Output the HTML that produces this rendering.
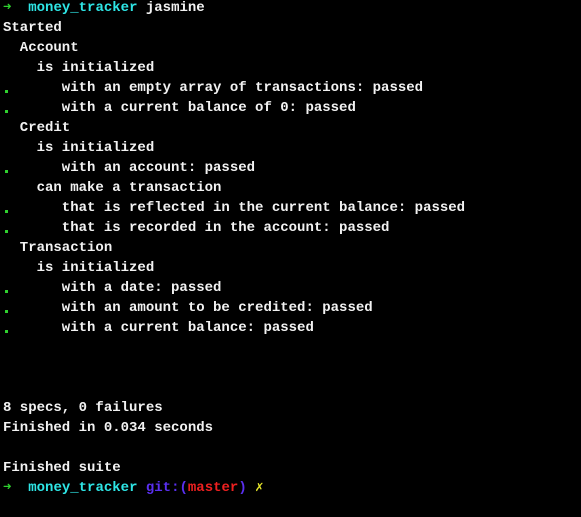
<!DOCTYPE html>
<html><head><meta charset="utf-8"><style>
html,body{margin:0;padding:0;background:#000;width:581px;height:517px;overflow:hidden}
pre{margin:0;position:absolute;left:3px;top:-2px;font-family:"Liberation Mono","DejaVu Sans Mono",monospace;font-weight:bold;font-size:14px;line-height:20px;color:#f2f2f2}
.g{color:#2fd12f}.c{color:#2ee6e6}.b{color:#5a2ff0}.r{color:#ee2020}.y{color:#e6e62a}
.d{position:absolute;left:5px;width:3px;height:3px;background:#2fd12f}
</style></head><body><pre><span class="g">➜</span>  <span class="c">money_tracker</span> jasmine
Started
  Account
    is initialized
       with an empty array of transactions: passed
       with a current balance of 0: passed
  Credit
    is initialized
       with an account: passed
    can make a transaction
       that is reflected in the current balance: passed
       that is recorded in the account: passed
  Transaction
    is initialized
       with a date: passed
       with an amount to be credited: passed
       with a current balance: passed



8 specs, 0 failures
Finished in 0.034 seconds

Finished suite
<span class="g">➜</span>  <span class="c">money_tracker</span> <span class="b">git:(</span><span class="r">master</span><span class="b">)</span> <span class="y">✗</span></pre>
<div class="d" style="top:90px"></div><div class="d" style="top:110px"></div><div class="d" style="top:170px"></div><div class="d" style="top:210px"></div><div class="d" style="top:230px"></div><div class="d" style="top:290px"></div><div class="d" style="top:310px"></div><div class="d" style="top:330px"></div>
</body></html>
